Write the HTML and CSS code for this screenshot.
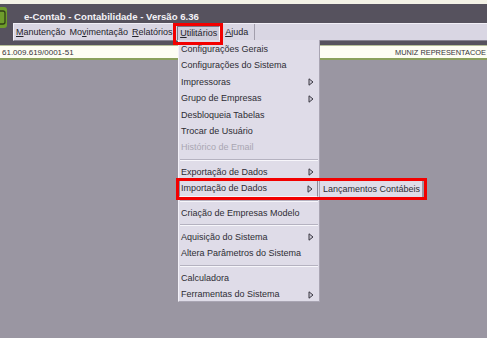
FILE: index.html
```html
<!DOCTYPE html>
<html lang="pt">
<head>
<meta charset="utf-8">
<title>e-Contab</title>
<link rel="stylesheet" href="styles.css">
</head>
<body>
<div class="top-strip"></div>
<header class="header">
  <div class="logo">
    <svg width="7" height="21" viewBox="0 0 7 21">
      <rect x="-7" y="0" width="14" height="21" rx="3" fill="#6e9c2b"/>
      <path d="M-2 4 H3 Q5 4 5 6 V15 Q5 17 3 17 H-2" fill="none" stroke="#2f3d17" stroke-width="1.3"/>
    </svg>
  </div>
  <div class="header-main">
    <div class="title">e-Contab - Contabilidade - Versão 6.36</div>
    <nav class="menubar">
      <div class="menu-group">
        <span class="mi"><u>M</u>anutenção</span>
        <span class="mi">Mo<u>v</u>imentação</span>
        <span class="mi"><u>R</u>elatórios</span>
        <span class="mi pressed"><u>U</u>tilitários</span>
        <span class="mi ajuda"><u>A</u>juda</span>
      </div>
    </nav>
  </div>
</header>
<div class="status">
  <span class="status-left">61.009.619/0001-51</span>
  <span class="status-right">MUNIZ REPRESENTACOE</span>
</div>

<div class="dropdown">
  <div class="item">Configurações Gerais</div>
  <div class="item">Configurações do Sistema</div>
  <div class="item">Impressoras<svg class="arrow" width="6" height="8" viewBox="0 0 6 8"><polygon points="1,0.8 5,4 1,7.2" fill="#c9c6d3" stroke="#3a3842" stroke-width="1"/></svg></div>
  <div class="item">Grupo de Empresas<svg class="arrow" width="6" height="8" viewBox="0 0 6 8"><polygon points="1,0.8 5,4 1,7.2" fill="#c9c6d3" stroke="#3a3842" stroke-width="1"/></svg></div>
  <div class="item">Desbloqueia Tabelas</div>
  <div class="item">Trocar de Usuário</div>
  <div class="item disabled">Histórico de Email</div>
  <div class="sep"></div>
  <div class="item">Exportação de Dados<svg class="arrow" width="6" height="8" viewBox="0 0 6 8"><polygon points="1,0.8 5,4 1,7.2" fill="#c9c6d3" stroke="#3a3842" stroke-width="1"/></svg></div>
  <div class="item active">Importação de Dados<svg class="arrow" width="6" height="8" viewBox="0 0 6 8"><polygon points="1,0.8 5,4 1,7.2" fill="#c9c6d3" stroke="#3a3842" stroke-width="1"/></svg></div>
  <div class="sep"></div>
  <div class="item">Criação de Empresas Modelo</div>
  <div class="sep"></div>
  <div class="item">Aquisição do Sistema<svg class="arrow" width="6" height="8" viewBox="0 0 6 8"><polygon points="1,0.8 5,4 1,7.2" fill="#c9c6d3" stroke="#3a3842" stroke-width="1"/></svg></div>
  <div class="item">Altera Parâmetros do Sistema</div>
  <div class="sep"></div>
  <div class="item">Calculadora</div>
  <div class="item">Ferramentas do Sistema<svg class="arrow" width="6" height="8" viewBox="0 0 6 8"><polygon points="1,0.8 5,4 1,7.2" fill="#c9c6d3" stroke="#3a3842" stroke-width="1"/></svg></div>
</div>

<div class="submenu">
  <div class="item">Lançamentos Contábeis</div>
</div>

<div class="mark mark-util"></div>
<div class="mark mark-import"></div>
</body>
</html>
```

FILE: styles.css
```css
* { box-sizing: border-box; }
html, body {
  margin: 0;
  padding: 0;
  width: 487px;
  height: 338px;
  overflow: hidden;
  background: #9a96a2;
  font-family: "Liberation Sans", Arial, sans-serif;
  font-size: 9px;
  color: #2e2c34;
}
u { text-decoration: underline; text-underline-offset: 1px; }

.top-strip {
  height: 4px;
  background: #f3f2e6;
}

.header {
  display: flex;
  background: #56525e;
  height: 41px;
}
.logo {
  width: 7px;
  height: 21px;
  margin-top: 3px;
  flex: none;
}
.logo svg { display: block; }

.header-main {
  flex: 1;
  margin-left: 6px;
  display: flex;
  flex-direction: column;
}
.title {
  height: 19px;
  padding: 7px 0 0 11px;
  color: #f4f3f7;
  font-weight: bold;
  font-size: 9.6px;
  line-height: 11px;
  white-space: nowrap;
}
.menubar {
  height: 18px;
  background: #d9d6e3;
  border-top: 1px solid #f1eff7;
  border-left: 1px solid #f1eff7;
  border-bottom: 1px solid #85818f;
  display: flex;
}
.menu-group {
  display: flex;
  align-items: center;
  padding-left: 0;
  padding-right: 4px;
  border-right: 1px solid #a29eac;
  height: 100%;
}
.mi {
  padding: 0 2px;
  line-height: 12px;
  white-space: nowrap;
  color: #25232b;
}
.mi.pressed {
  margin-left: 2.5px;
  border: 1px solid;
  border-color: #7b7787 #f5f4fa #f5f4fa #7b7787;
  background: #cfccda;
  height: 15px;
  line-height: 13px;
  margin-top: 3px;
}
.mi.ajuda { margin-left: 3px; }

.status {
  height: 15px;
  background: #fdfdf3;
  border-top: 1px solid #b6bf98;
  border-bottom: 2px solid #8aa05c;
  display: flex;
  justify-content: space-between;
  align-items: center;
  font-size: 8px;
  color: #35333a;
  white-space: nowrap;
}
.status-left { padding-left: 2px; }
.status-right {
  font-size: 7.4px;
  padding-right: 1px;
}

.dropdown {
  position: absolute;
  left: 178px;
  top: 40px;
  width: 142px;
  height: 262px;
  background: #dfdce8;
  border-left: 1px solid #f3f1f8;
  border-right: 1px solid #a9a5b3;
  border-bottom: 1px solid #a9a5b3;
  padding-top: 1px;
}
.item {
  position: relative;
  height: 16.4px;
  line-height: 16.4px;
  padding-left: 2px;
  white-space: nowrap;
  color: #2e2c34;
}
.item.disabled { color: #a9a6b2; }
.item.active {
  border: 1px solid;
  border-color: #8e8a99 #8e8a99 #f6f5fa #8e8a99;
  line-height: 14.4px;
  padding-left: 1px;
  margin-right: 1px;
}
.arrow {
  position: absolute;
  right: 5px;
  top: 4.5px;
}
.item.active .arrow { right: 4px; top: 3.5px; }
.sep {
  height: 2px;
  margin: 3px 1px;
  border-top: 1px solid #b5b2c0;
  border-bottom: 1px solid #f7f6fb;
}

.submenu {
  position: absolute;
  left: 320px;
  top: 181px;
  width: 102px;
  height: 17px;
  background: #dfdce8;
}
.submenu .item {
  height: 17px;
  line-height: 17px;
  padding-left: 3px;
}

.mark {
  position: absolute;
  border: 3px solid #f20000;
}
.mark-util {
  left: 173px;
  top: 23px;
  width: 50px;
  height: 22px;
}
.mark-import {
  left: 176px;
  top: 178px;
  width: 251px;
  height: 22px;
}
```
